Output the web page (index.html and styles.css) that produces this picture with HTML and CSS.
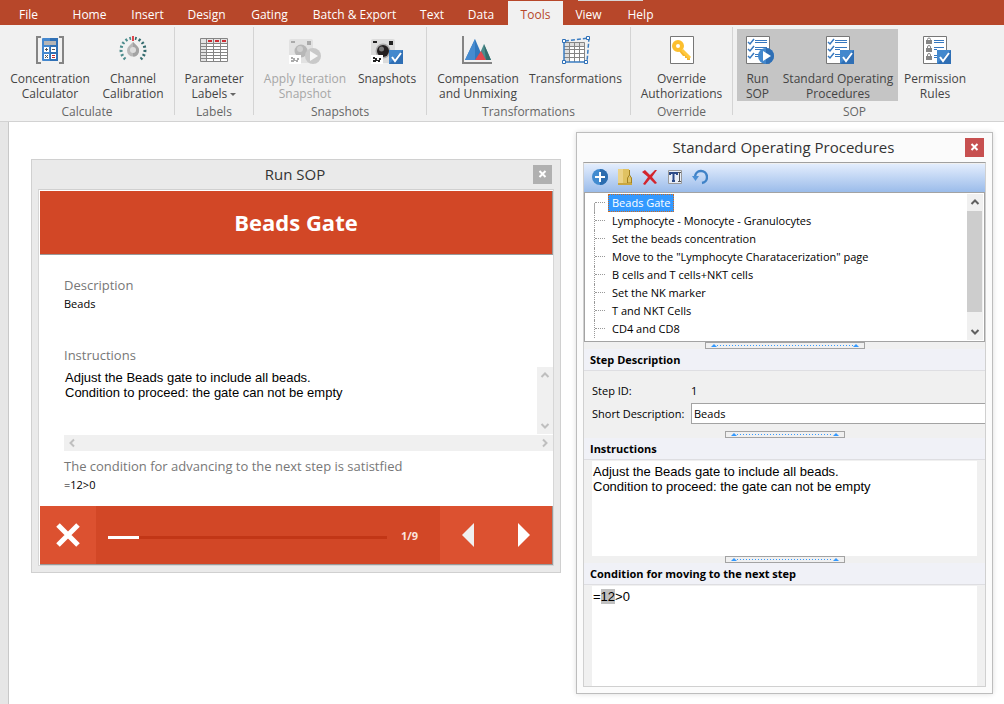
FILE: index.html
```
<!DOCTYPE html>
<html lang="en">
<head>
    <meta charset="UTF-8">
    <meta name="viewport" content="width=device-width, initial-scale=1.0">
    <title>Standard Operating Procedures</title>
    <link rel="stylesheet" href="styles.css">
</head>
<body>
    <nav class="tabs">
        <a href="#">File</a>
        <a href="#">Home</a>
        <a href="#">Insert</a>
        <a href="#">Design</a>
        <a href="#">Gating</a>
        <a href="#">Batch &amp; Export</a>
        <a href="#">Text</a>
        <a href="#">Data</a>
        <a href="#" class="active">Tools</a>
        <a href="#" class="context">View</a>
        <a href="#">Help</a>
    </nav>

    <div class="ribbon">
        <section class="group calculate">
            <div class="tools">
                <button type="button" class="tool">
                    <svg viewBox="0 0 32 32">
                        <path d="M7 3H3v26h4M25 3h4v26h-4" fill="none" stroke="#848484" stroke-width="2"/>
                        <rect x="8" y="4" width="16" height="23" rx="1" fill="#4488cf"/>
                        <path d="M16 4h8v23h-8z" fill="#3070b5"/>
                        <path d="M10 7h12v4H10z" fill="#b5b5b5"/>
                        <path d="M10 13h5v5h-5zM17 13h5v5h-5zM10 20h5v5h-5zM17 20h5v5h-5z" fill="#fff"/>
                        <path d="M11 15.500h3M12.500 14v3M18 15.500h3M11 21l3 3M14 21l-3 3" stroke="#555"/>
                        <path d="M18 21.500h3M18 23.500h3" stroke="#c0272d"/>
                    </svg>
                    <span>Concentration Calculator</span>
                </button>
                <button type="button" class="tool">
                    <svg viewBox="0 0 32 32">
                        <path d="M8.300 25.200A12 12 0 0 1 14 4.200" fill="none" stroke="#4c8c8c" stroke-width="3" stroke-dasharray="2 2.200"/>
                        <path d="M23.700 25.200A12 12 0 0 0 18 4.200" fill="none" stroke="#346b6d" stroke-width="3" stroke-dasharray="2 2.200"/>
                        <path d="M15 2h2v5h-2z" fill="#e0464c"/>
                        <path d="M16 8l4 4a6 6 0 1 1-8 0z" fill="#b9b9b9"/>
                        <path d="M16 8l4 4a6 6 0 0 1-4 10.500z" fill="#a3a3a3"/>
                        <circle cx="16" cy="16" r="3" fill="#ddd"/>
                    </svg>
                    <span>Channel Calibration</span>
                </button>
            </div>
            <h2>Calculate</h2>
        </section>

        <section class="group labels">
            <div class="tools">
                <button type="button" class="tool">
                    <svg viewBox="0 0 32 32">
                        <path d="M2.500 4.500h27v23h-27z" fill="#fff"/>
                        <path d="M3 5h6v22H3zM3 5h26v4H3z" fill="#e3e3e3"/>
                        <path d="M2.500 4.500h27v23h-27zM8.500 5v22M15.500 5v22M22.500 5v22M3 9.500h26M3 12.500h26M3 15.500h26M3 18.500h26M3 21.500h26M3 24.500h26" fill="none" stroke="#858585"/>
                        <path d="M10 7h4M17 7h4M24 7h4" stroke="#cf2d34" stroke-width="2"/>
                    </svg>
                    <span>Parameter Labels <i class="caret"></i></span>
                </button>
            </div>
            <h2>Labels</h2>
        </section>

        <section class="group snapshots">
            <div class="tools">
                <button type="button" class="tool" disabled>
                    <svg viewBox="0 0 32 32">
                        <rect y="5" width="24" height="24" rx="2" fill="#e2e2e2"/>
                        <path d="M2 7h4v2H2zM18 7h4v4h-4z" fill="#aaa"/>
                        <circle cx="12" cy="17" r="6.500" fill="#b7b7b7"/>
                        <circle cx="11" cy="15" r="3" fill="#cfcfcf"/>
                        <path d="M0 21h12v9H0z" fill="#fff"/>
                        <path d="M2 23h2v1h2v2h2v-2h2v2h-1v2H7v-1H5v1H2v-2h2v-1H2z" fill="#aaa"/>
                        <circle cx="24" cy="22" r="8" fill="#c9c9c9"/>
                        <path d="M21 17l8 5-8 5z" fill="#f7f7f7"/>
                    </svg>
                    <span>Apply Iteration Snapshot</span>
                </button>
                <button type="button" class="tool">
                    <svg viewBox="0 0 32 32">
                        <rect y="5" width="24" height="24" rx="2" fill="#dcdcdc"/>
                        <path d="M2 7h4v2H2zM18 7h4v4h-4z" fill="#222"/>
                        <circle cx="12" cy="17" r="7.500" fill="#aaa"/>
                        <circle cx="12" cy="17" r="6" fill="#231f20"/>
                        <circle cx="10.500" cy="15" r="2.500" fill="#777"/>
                        <path d="M0 21h12v9H0z" fill="#fff"/>
                        <path d="M2 23h2v1h2v2h2v-2h2v2h-1v2H7v-1H5v1H2v-2h2v-1H2z" fill="#222"/>
                        <path d="M18 16h14v14H18z" fill="#4388cd"/>
                        <path d="M32 16v14H18z" fill="#2f6fb5"/>
                        <path d="M21 23l3 4 6-8" fill="none" stroke="#fff" stroke-width="2"/>
                    </svg>
                    <span>Snapshots</span>
                </button>
            </div>
            <h2>Snapshots</h2>
        </section>

        <section class="group transforms">
            <div class="tools">
                <button type="button" class="tool">
                    <svg viewBox="0 0 32 32">
                        <path d="M1 2v27h29" fill="none" stroke="#848484" stroke-width="2"/>
                        <path d="M15 26l7-16 7 16z" fill="#4c8c8c"/>
                        <path d="M22 10l7 16h-5z" fill="#336c6d"/>
                        <path d="M3 26L13 5l9 21z" fill="#3278be"/>
                        <path d="M3 26L13 5v21z" fill="#468bd0"/>
                        <path d="M13 26l6-9 5 9z" fill="#e0484e"/>
                    </svg>
                    <span>Compensation and Unmixing</span>
                </button>
                <button type="button" class="tool">
                    <svg viewBox="0 0 32 32">
                        <path d="M4 8h20v19H4z" fill="#fff"/>
                        <path d="M4 8h6v19H4zM4 8h20v4H4z" fill="#dedede"/>
                        <path d="M4 8.500h20.500V27M9.500 8v20M14.500 8v20M19.500 8v20M4 12.500h20M4 15.500h20M4 19.500h20M4 23.500h20" fill="none" stroke="#858585"/>
                        <path d="M4 8v20h22" fill="none" stroke="#3b7dc2" stroke-width="1.500"/>
                        <path d="M5 7l24-3-2 24" fill="none" stroke="#3b7dc2" stroke-width="1.500" stroke-dasharray="4 2"/>
                        <path d="M2.500 5.500h3v3h-3zM26.500 2.500h3v3h-3zM2.500 26.500h3v3h-3zM24.500 26.500h3v3h-3z" fill="#fff" stroke="#2f70b7"/>
                    </svg>
                    <span>Transformations</span>
                </button>
            </div>
            <h2>Transformations</h2>
        </section>

        <section class="group override">
            <div class="tools">
                <button type="button" class="tool">
                    <svg viewBox="0 0 32 32">
                        <path d="M4.500 2.500h23v27h-23z" fill="#fff" stroke="#777"/>
                        <path d="M14 14l10 10v2h-3v-2h-2v-2h-2l-4-5z" fill="#f5b52a"/>
                        <circle cx="12" cy="12" r="4" fill="#fff" stroke="#fcbf2e" stroke-width="4"/>
                        <path d="M16 16l8 8" stroke="#ffc83f" stroke-width="3"/>
                    </svg>
                    <span>Override Authorizations</span>
                </button>
            </div>
            <h2>Override</h2>
        </section>

        <section class="group sop">
            <div class="tools">
                <button type="button" class="tool pressed">
                    <svg viewBox="0 0 32 32">
                        <path d="M4.500 2.500h23v27h-23z" fill="#fff" stroke="#777"/>
                        <path d="M13 6.500h12M13 8.500h12M13 13.500h12M13 15.500h8M13 20.500h5M13 22.500h5" stroke="#3778bf"/>
                        <path d="M6 8l2 2 4-5M6 15l2 2 4-5M6 22l2 2 4-5" fill="none" stroke="#3778bf" stroke-width="1.500"/>
                        <circle cx="24" cy="22" r="8" fill="#4388cd"/>
                        <path d="M24 14a8 8 0 0 1 0 16z" fill="#2f6fb5"/>
                        <path d="M21 17l8 5-8 5z" fill="#fff"/>
                    </svg>
                    <span>Run SOP</span>
                </button>
                <button type="button" class="tool pressed">
                    <svg viewBox="0 0 32 32">
                        <path d="M4.500 2.500h23v27h-23z" fill="#fff" stroke="#777"/>
                        <path d="M13 6.500h12M13 8.500h12M13 13.500h12M13 15.500h5M13 20.500h5M13 22.500h5" stroke="#3778bf"/>
                        <path d="M6 8l2 2 4-5M6 15l2 2 4-5M6 22l2 2 4-5" fill="none" stroke="#3778bf" stroke-width="1.500"/>
                        <path d="M18 16h14v14H18z" fill="#4388cd"/>
                        <path d="M32 16v14H18z" fill="#2f6fb5"/>
                        <path d="M21 23l3 4 6-8" fill="none" stroke="#fff" stroke-width="2"/>
                    </svg>
                    <span>Standard Operating Procedures</span>
                </button>
                <button type="button" class="tool">
                    <svg viewBox="0 0 32 32">
                        <path d="M4.500 2.500h23v27h-23z" fill="#fff" stroke="#777"/>
                        <path d="M15 6.500h10M15 8.500h10M15 13.500h10M15 15.500h3M15 21.500h3M15 23.500h3" stroke="#3778bf"/>
                        <path d="M7 6h6v4H7zM7 14h6v4H7zM7 22h6v4H7z" fill="#858585"/>
                        <path d="M8.500 6V5.500a1.500 1.500 0 0 1 3 0V6M8.500 14v-1a1.500 1.500 0 0 1 3 0v1M8.500 22v-1a1.500 1.500 0 0 1 3 0v1" fill="none" stroke="#858585"/>
                        <path d="M18 16h14v14H18z" fill="#4388cd"/>
                        <path d="M32 16v14H18z" fill="#2f6fb5"/>
                        <path d="M21 23l3 4 6-8" fill="none" stroke="#fff" stroke-width="2"/>
                    </svg>
                    <span>Permission Rules</span>
                </button>
            </div>
            <h2>SOP</h2>
        </section>
    </div>

    <main class="workspace">
        <!-- step runner -->
        <section class="window run-window">
            <header class="titlebar">
                <h1>Run SOP</h1>
                <button type="button" class="close" aria-label="Close">
                    <svg viewBox="0 0 19 19"><path d="M6.500 6l6 6M12.500 6l-6 6" stroke="#fff" stroke-width="2"/></svg>
                </button>
            </header>
            <div class="run-frame">
                <div class="run-title">Beads Gate</div>
                <div class="run-body">
                    <div class="field">
                        <h3>Description</h3>
                        <p>Beads</p>
                    </div>
                    <label class="run-label" for="run-text">Instructions</label>
                    <div class="run-text">
                        <textarea id="run-text" readonly>Adjust the Beads gate to include all beads.
Condition to proceed: the gate can not be empty</textarea>
                        <div class="bar-v">
                            <svg viewBox="0 0 16 16"><path d="M4.500 10L8 6.500l3.500 3.500"/></svg>
                            <svg viewBox="0 0 16 16"><path d="M4.500 6L8 9.500 11.500 6"/></svg>
                        </div>
                    </div>
                    <div class="bar-h">
                        <svg viewBox="0 0 16 16"><path d="M10 4.500L6.500 8l3.500 3.500"/></svg>
                        <svg viewBox="0 0 16 16"><path d="M6 4.500L9.500 8 6 11.500"/></svg>
                    </div>
                    <div class="field condition">
                        <h3>The condition for advancing to the next step is satistfied</h3>
                        <p>=12&gt;0</p>
                    </div>
                </div>
                <footer class="run-footer">
                    <button type="button" class="cancel" aria-label="Cancel">
                        <svg viewBox="0 0 24 24"><path d="M2 2l20 20M22 2L2 22" stroke="#fff" stroke-width="5"/></svg>
                    </button>
                    <progress value="1" max="9" aria-label="Progress"></progress>
                    <span class="count">1/9</span>
                    <button type="button" class="step" aria-label="Previous">
                        <svg viewBox="0 0 12 24"><path d="M12 0v24L0 12z" fill="#f0f0f0"/></svg>
                    </button>
                    <button type="button" class="step" aria-label="Next">
                        <svg viewBox="0 0 12 24"><path d="M0 0v24l12-12z" fill="#fff"/></svg>
                    </button>
                </footer>
            </div>
        </section>

        <!-- procedure editor -->
        <section class="window sop-window">
            <header class="titlebar">
                <h1>Standard Operating Procedures</h1>
                <button type="button" class="close" aria-label="Close">
                    <svg viewBox="0 0 19 19"><path d="M6.500 6l6 6M12.500 6l-6 6" stroke="#fff" stroke-width="2"/></svg>
                </button>
            </header>
            <div class="sop-frame">
                <div class="toolbar">
                    <button type="button" aria-label="Add">
                        <svg viewBox="0 0 16 16"><circle cx="8" cy="8" r="8" fill="#428bd0"/><path d="M8 0a8 8 0 0 1 0 16z" fill="#2b6caf"/><path d="M8 3v10M3 8h10" stroke="#fff" stroke-width="2"/></svg>
                    </button>
                    <button type="button" aria-label="Group">
                        <svg viewBox="0 0 16 16"><path d="M1 0h11v7l3 2v7H1z" fill="#e0c262"/><path d="M1 0h5v16H1z" fill="#ecd388"/><path d="M12.500 1v5l-2 3v5h4V9l-2-3" fill="none" stroke="#a38220"/><path d="M1 14h14v2H1z" fill="#c9a640"/></svg>
                    </button>
                    <button type="button" aria-label="Delete">
                        <svg viewBox="0 0 16 16"><path d="M0 3l3-2 5 5 5-5h2l-5 7 5 6-2 1-5-5-5 6-2-1 5-7z" fill="#d3252e"/></svg>
                    </button>
                    <button type="button" aria-label="Rename">
                        <svg viewBox="0 0 16 16"><path d="M1.500 1.500h13v13h-13z" fill="#e8eef8" stroke="#999"/><path d="M3 6V4h7v2M6.500 4v8M5 12h3" fill="none" stroke="#2c4b88" stroke-width="2"/><path d="M12.500 3v10M11 3.500h3M11 12.500h3" stroke="#555"/></svg>
                    </button>
                    <button type="button" aria-label="Undo">
                        <svg viewBox="0 0 16 16"><path d="M3 8a6 6 0 1 1 7 6" fill="none" stroke="#3f82c7" stroke-width="2.500"/><path d="M0 7h7l-3.500 5z" fill="#4b8fd4"/></svg>
                    </button>
                </div>
                <div class="tree-box">
                    <ul class="tree">
                        <li><span class="selected">Beads Gate</span></li>
                        <li><span>Lymphocyte - Monocyte - Granulocytes</span></li>
                        <li><span>Set the beads concentration</span></li>
                        <li><span>Move to the "Lymphocyte Charatacerization" page</span></li>
                        <li><span>B cells and T cells+NKT cells</span></li>
                        <li><span>Set the NK marker</span></li>
                        <li><span>T and NKT Cells</span></li>
                        <li><span>CD4 and CD8</span></li>
                    </ul>
                    <div class="bar-v dark">
                        <svg viewBox="0 0 16 16"><path d="M4.500 10L8 6.500l3.500 3.500"/></svg>
                        <div class="thumb"></div>
                        <svg viewBox="0 0 16 16"><path d="M4.500 6L8 9.500 11.500 6"/></svg>
                    </div>
                </div>
                <div class="splitter wide"></div>
                <h2 class="section-title">Step Description</h2>
                <div class="step-form">
                    <span>Step ID:</span>
                    <span class="step-id">1</span>
                    <label for="short">Short Description:</label>
                    <input id="short" type="text" value="Beads">
                </div>
                <div class="splitter"></div>
                <h2 class="section-title"><label for="instructions">Instructions</label></h2>
                <textarea id="instructions" class="editor">Adjust the Beads gate to include all beads.
Condition to proceed: the gate can not be empty</textarea>
                <div class="splitter"></div>
                <h2 class="section-title" id="condition-title">Condition for moving to the next step</h2>
                <div class="editor formula" contenteditable="true" role="textbox" aria-labelledby="condition-title">=<mark>12</mark>&gt;0</div>
            </div>
        </section>
    </main>
</body>
</html>
```
FILE: styles.css
```
* {
    box-sizing: border-box;
}
body {
    margin: 0;
    min-height: 100vh;
    display: flex;
    flex-direction: column;
    font-family: "Open Sans", "Noto Sans", sans-serif;
    font-size: 11px;
    color: #000;
    background: #fff;
}
h1, h2, h3, p {
    margin: 0;
    font-weight: normal;
}
button {
    border: 0;
    padding: 0;
    background: none;
    font-family: inherit;
}
svg {
    display: block;
}

/* tabs */
.tabs {
    display: grid;
    grid-template-columns: 57px 65px 51px 67px 59px 111px 44px 54px 55px 51px 53px;
    height: 25px;
    padding-top: 1px;
    background: #b7472a;
}
.tabs a {
    color: #fff;
    font-size: 12px;
    line-height: 27px;
    height: 24px;
    text-align: center;
    text-decoration: none;
    white-space: nowrap;
}
.tabs .active {
    color: #b7472a;
    background: #f1f1f1;
}
.tabs .context {
    position: relative;
}
.tabs .context::before {
    content: "";
    position: absolute;
    top: -1px;
    left: 15px;
    width: 65px;
    height: 1px;
    background: #d6d6d6;
}

/* ribbon */
.ribbon {
    display: flex;
    height: 97px;
    padding-top: 2px;
    background: #f1f1f1;
    border-bottom: 1px solid #d2d2d2;
}
.group {
    height: 88px;
    padding: 2px 4px 0;
    border-right: 1px solid #d4d4d4;
}
.group:last-child {
    border-right: 0;
}
.group h2 {
    font-size: 12px;
    line-height: 21px;
    color: #666;
    text-align: center;
}
.tools {
    display: grid;
    height: 72px;
}
.calculate .tools {
    grid-template-columns: 92px 74px;
}
.labels .tools {
    grid-template-columns: 70px;
}
.snapshots .tools {
    grid-template-columns: 94px 70px;
}
.transforms .tools {
    grid-template-columns: 94px 101px;
}
.override .tools {
    grid-template-columns: 93px;
}
.sop .tools {
    grid-template-columns: 41px 120px 74px;
}
.tool {
    display: flex;
    flex-direction: column;
    align-items: center;
    gap: 5px;
    padding-top: 5px;
    font-size: 12px;
    line-height: 15px;
    color: #444;
}
.tool svg {
    width: 32px;
    height: 32px;
}
.tool:disabled {
    color: #a6a6a6;
}
.pressed {
    background: #c5c5c5;
}
.caret {
    display: inline-block;
    vertical-align: middle;
    border: 3px solid transparent;
    border-top-color: #666;
    border-bottom: 0;
}

/* windows */
.workspace {
    position: relative;
    flex: 1;
    border-left: 8px solid #e6e6e6;
    box-shadow: inset 1px 0 #c8c8c8;
}
.window {
    position: absolute;
    border: 1px solid #d0d0d0;
    padding: 0 6px 6px;
}
.titlebar {
    display: flex;
    align-items: center;
    height: 29px;
}
.titlebar h1 {
    flex: 1;
    padding-left: 19px;
    font-size: 15px;
    line-height: 29px;
    text-align: center;
    color: #333;
}
.close {
    width: 19px;
    height: 19px;
    margin-right: 2px;
    background: #b0b0b0;
}
.bar-v, .bar-h {
    display: flex;
    justify-content: space-between;
    background: #f0f0f0;
}
.bar-v {
    flex-direction: column;
    width: 16px;
}
.bar-v svg, .bar-h svg {
    width: 16px;
    height: 16px;
    fill: none;
    stroke: #bfbfbf;
    stroke-width: 2;
}
.bar-v.dark svg {
    stroke: #606060;
}

/* run window */
.run-window {
    top: 37px;
    left: 23px;
    width: 530px;
    background: #eaeaea;
}
.run-frame {
    border: 1px solid #d6d6d6;
    border-top-color: #d0d0d0;
    background: #fff;
}
.run-title {
    margin: 1px 0 0 1px;
    border-right: 1px solid #999;
    border-bottom: 1px solid #999;
    font-size: 22px;
    font-weight: bold;
    line-height: 63px;
    text-align: center;
    color: #fff;
    background: #d24726;
}
.run-body {
    padding: 21px 0 11px 25px;
}
.field h3, .run-label {
    display: block;
    font-size: 13px;
    line-height: 18px;
    color: #777;
}
.field p {
    line-height: 20px;
}
.run-label {
    margin-top: 32px;
}
.run-text {
    display: flex;
    height: 67px;
    margin: 3px 0 1px;
}
.run-text textarea {
    flex: 1;
    border: 0;
    padding: 3px 1px;
    resize: none;
    overflow: hidden;
    font: 13px/15px "Liberation Sans", Arial, sans-serif;
    color: #000;
}
.condition {
    margin-top: 6px;
}
.run-footer {
    display: flex;
    align-items: center;
    height: 59px;
    margin-left: 1px;
    border-right: 1px solid #999;
    border-bottom: 1px solid #999;
    background: #d24726;
}
.cancel, .step {
    display: flex;
    align-items: center;
    justify-content: center;
    height: 58px;
    width: 56px;
    background: #dc5130;
}
.cancel svg {
    width: 24px;
    height: 24px;
}
.step svg {
    width: 12px;
    height: 24px;
}
progress {
    flex: 1;
    height: 3px;
    margin: 4px 0 0 12px;
    border: 0;
    appearance: none;
}
progress::-webkit-progress-bar {
    background: #c23616;
}
progress::-webkit-progress-value {
    background: #fff;
}
.count {
    width: 53px;
    padding-left: 14px;
    font-weight: bold;
    color: #fbe4de;
}

/* procedures window */
.sop-window {
    top: 10px;
    left: 568px;
    width: 417px;
    border-color: #bdbdbd;
    background: #fbfbfb;
    box-shadow: 0 0 5px #ddd;
}
.sop-window .close {
    background: #c75050;
}
.sop-frame {
    border: 1px solid #d0d0d0;
    border-top: 1px solid #a0a0a0;
    padding-top: 1px;
    background: #f0f0f0;
}
.toolbar {
    display: flex;
    gap: 5px;
    height: 28px;
    padding: 3px 6px;
    background: linear-gradient(#e3edfd, #9bbcea);
}
.toolbar button {
    display: flex;
    align-items: center;
    justify-content: center;
    width: 20px;
    height: 20px;
}
.toolbar svg {
    width: 16px;
    height: 16px;
}
.tree-box {
    display: flex;
    justify-content: space-between;
    height: 150px;
    padding: 1px;
    border: 1px solid #a3a3a3;
    background: #fff;
}
.tree {
    margin: 0;
    padding: 0 0 0 8px;
    list-style: none;
}
.tree li {
    position: relative;
    height: 18px;
    padding-left: 13px;
    border-left: 1px dotted #999;
}
.tree li:first-child {
    border-image: linear-gradient(transparent 50%, #aaa 50%) 1;
}
.tree li::before {
    content: "";
    position: absolute;
    top: 8px;
    left: 0;
    width: 10px;
    border-top: 1px dotted #999;
}
.tree span {
    display: inline-block;
    padding: 0 3px;
    border: 1px solid transparent;
    line-height: 16px;
    white-space: nowrap;
}
.tree .selected {
    color: #fff;
    background: #3399ff;
    border: 1px dotted #d2691e;
}
.thumb {
    flex: 1;
    width: 15px;
    margin: 1px 0 12px;
    background: #cdcdcd;
}
.splitter {
    display: flex;
    align-items: center;
    justify-content: space-between;
    width: 120px;
    height: 7px;
    margin: 0 auto;
    padding: 0 5px;
    border: 1px solid #a3a3a3;
}
.splitter.wide {
    width: 160px;
}
/* dotted grip between the two arrows */
.splitter {
    background: linear-gradient(90deg, #3399ff 1px, transparent 1px) 9px 2px / 3px 1px repeat-x content-box;
}
.splitter::before, .splitter::after {
    content: "";
    border: 3px solid #f0f0f0;
    border-top: 0;
    border-bottom-color: #3399ff;
}
.section-title {
    height: 22px;
    padding-left: 6px;
    border-bottom: 1px solid #dedee2;
    font-size: 11px;
    font-weight: bold;
    line-height: 21px;
    background: #f0f1f7;
}
.step-form {
    display: grid;
    grid-template-columns: 99px 1fr;
    grid-template-rows: 22px 21px;
    row-gap: 2px;
    align-items: center;
    padding: 8px 0 7px 8px;
}
.step-form input {
    width: 100%;
    height: 21px;
    padding: 0 2px;
    border: 1px solid #a3a3a3;
    border-right: 0;
    font: inherit;
    background: #fff;
}
.editor {
    display: block;
    width: calc(100% - 16px);
    height: 95px;
    margin: 1px 8px 0;
    padding: 3px 1px;
    border: 0;
    resize: none;
    font: 13px/15px "Liberation Sans", Arial, sans-serif;
    color: #000;
    background: #fff;
}
.formula {
    height: 100px;
}
.formula mark {
    color: inherit;
    background: #c0c0c0;
}
```
